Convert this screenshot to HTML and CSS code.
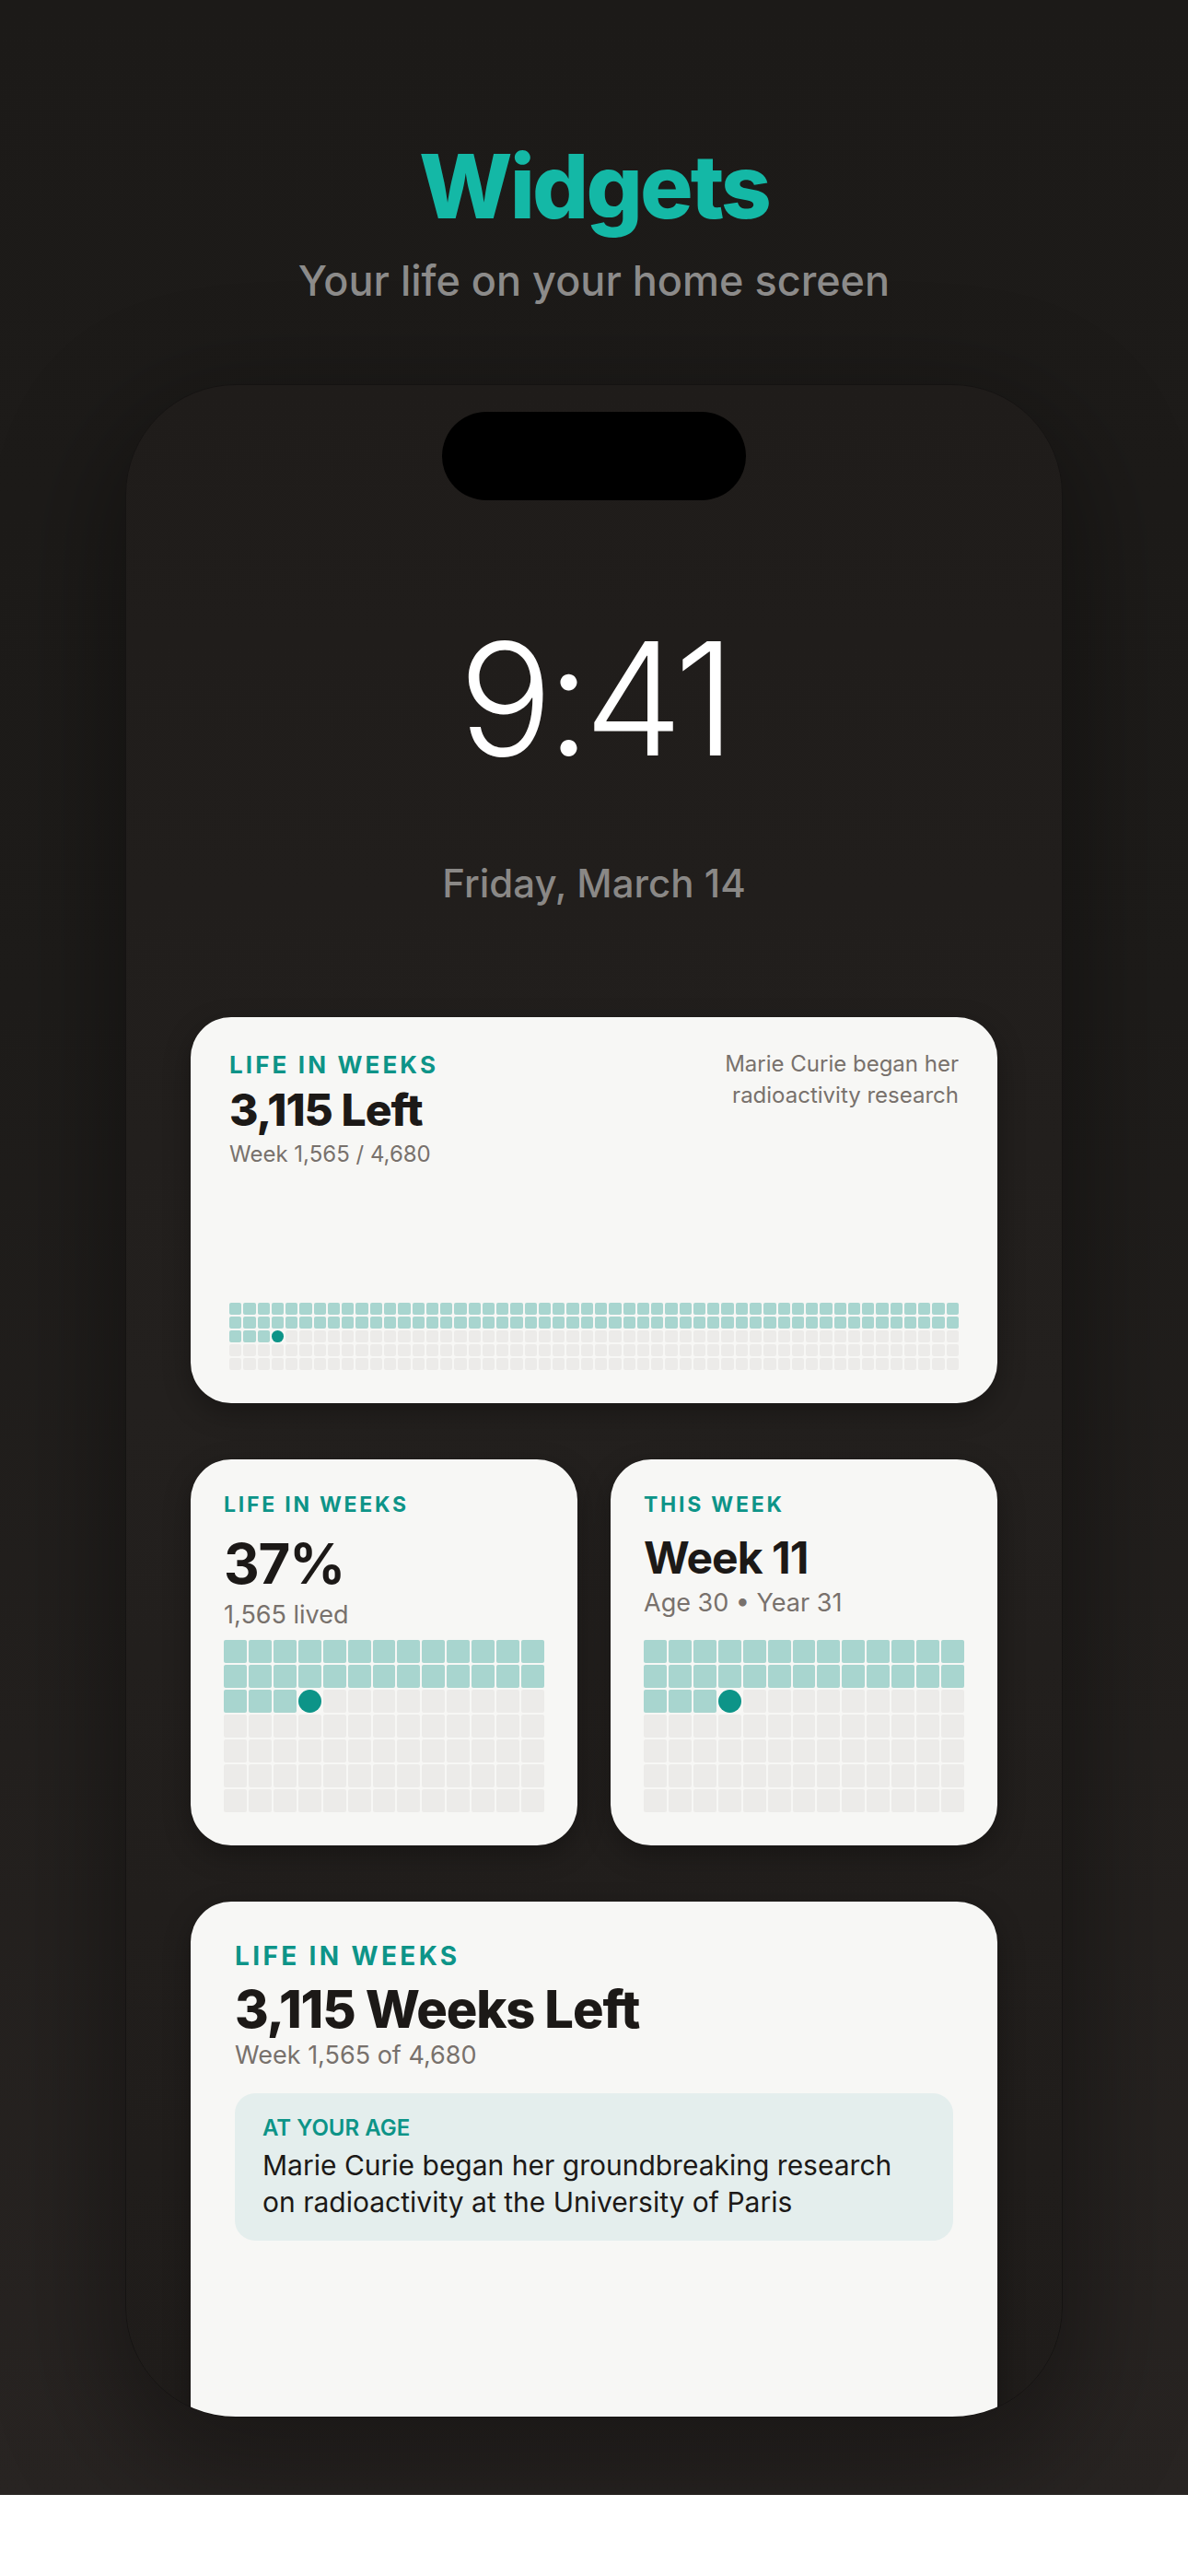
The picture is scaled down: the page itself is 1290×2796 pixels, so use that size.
FILE: index.html
```html
<!DOCTYPE html>
<html lang="en">
<head>
    <meta charset="UTF-8">
    <meta name="viewport" content="width=device-width, initial-scale=1.0">
    <title>Widgets</title>
    <link rel="stylesheet" href="styles.css">
</head>

<body>
    <div class="screen">
        <h1 class="title">Widgets</h1>
        <p class="subtitle">Your life on your home screen</p>

        <div class="phone">
            <div class="island"></div>
            <div class="clock">9:41</div>
            <div class="date">Friday, March 14</div>

            <div class="widgets">
                <!-- medium widget -->
                <div class="card card-wide">
                    <div class="head">
                        <div>
                            <div class="label">LIFE IN WEEKS</div>
                            <div class="big">3,115 Left</div>
                            <div class="sub">Week 1,565 / 4,680</div>
                        </div>
                        <div class="note">Marie Curie began her<br>radioactivity research</div>
                    </div>
                    <div class="weeks weeks-wide" data-cols="52" data-rows="5"></div>
                </div>

                <!-- two small widgets -->
                <div class="small-row">
                    <div class="card card-small">
                        <div class="label">LIFE IN WEEKS</div>
                        <div class="big big-pct">37%</div>
                        <div class="sub">1,565 lived</div>
                        <div class="weeks weeks-small" data-cols="13" data-rows="7"></div>
                    </div>
                    <div class="card card-small">
                        <div class="label">THIS WEEK</div>
                        <div class="big big-week">Week 11</div>
                        <div class="sub">Age 30 • Year 31</div>
                        <div class="weeks weeks-small" data-cols="13" data-rows="7"></div>
                    </div>
                </div>

                <!-- large widget -->
                <div class="card card-large">
                    <div class="label">LIFE IN WEEKS</div>
                    <div class="big">3,115 Weeks Left</div>
                    <div class="sub">Week 1,565 of 4,680</div>
                    <div class="fact">
                        <div class="fact-label">AT YOUR AGE</div>
                        <div class="fact-text">Marie Curie began her groundbreaking research<br>on radioactivity at the University of Paris</div>
                    </div>
                </div>
            </div>
        </div>
    </div>

    <script>
        // 画出每个小部件里的周格子：前两行已过，第三行三格，第四格是本周
        var grids = document.querySelectorAll(".weeks");
        for (var g = 0; g < grids.length; g++) {
            var cols = parseInt(grids[g].getAttribute("data-cols"));
            var rows = parseInt(grids[g].getAttribute("data-rows"));
            var lived = cols * 2 + 3;
            for (var i = 0; i < cols * rows; i++) {
                var cell = document.createElement("span");
                if (i < lived) {
                    cell.className = "cell lived";
                } else if (i == lived) {
                    cell.className = "cell now";
                } else {
                    cell.className = "cell";
                }
                grids[g].appendChild(cell);
            }
        }
    </script>
</body>

</html>
```

FILE: styles.css
```css
* {
    margin: 0;
    padding: 0;
    box-sizing: border-box;
}

html {
    background: #fff;
}

body {
    font-family: Inter, "Noto Sans", sans-serif;
}

.screen {
    background: linear-gradient(#1c1a18, #1e1c1a 40%, #282422);
    padding: 154px 0 84px;
}

.title {
    text-align: center;
    font-size: 96px;
    line-height: 96px;
    font-weight: 800;
    letter-spacing: -0.03em;
    color: #14b8a6;
}

.subtitle {
    margin-top: 28px;
    text-align: center;
    font-size: 45px;
    line-height: 53px;
    font-weight: 500;
    color: #8c8b8a;
}

/* 手机外壳 */
.phone {
    width: 1018px;
    height: 2207px;
    margin: 86px auto 0;
    padding: 0 70px;
    border: 1px solid #151312;
    border-radius: 120px;
    overflow: hidden;
    background: linear-gradient(#1f1c1a, #23201e 50%, #1f1c1a);
    box-shadow: 0 40px 120px 20px rgba(0, 0, 0, 0.35);
}

.island {
    width: 330px;
    height: 96px;
    margin: 29px auto 0;
    border-radius: 48px;
    background: #000;
}

.clock {
    margin-top: 130px;
    text-align: center;
    font-size: 170px;
    line-height: 170px;
    font-weight: 300;
    letter-spacing: -0.04em;
    color: #fff;
}

.date {
    margin-top: 90px;
    text-align: center;
    font-size: 42px;
    line-height: 52px;
    font-weight: 500;
    color: #8a8886;
}

.widgets {
    margin-top: 119px;
    display: flex;
    flex-direction: column;
    gap: 61px;
}

.card {
    background: #f7f7f5;
    border-radius: 44px;
    box-shadow: 0 10px 30px rgba(0, 0, 0, 0.3);
    display: flex;
    flex-direction: column;
}

.label {
    color: #0d9488;
    font-weight: 700;
    letter-spacing: 0.12em;
}

.big {
    color: #1c1917;
    font-weight: 700;
    letter-spacing: -0.02em;
}

.sub {
    color: #78716c;
}

/* 中号小部件 */
.card-wide {
    height: 419px;
    padding: 37px 42px 36px;
}

.card-wide .head {
    display: flex;
    justify-content: space-between;
    align-items: flex-start;
}

.card-wide .label {
    font-size: 26px;
    line-height: 30px;
}

.card-wide .big {
    margin-top: 8px;
    font-size: 48px;
    line-height: 51px;
    font-weight: 800;
}

.card-wide .sub {
    margin-top: 6px;
    font-size: 24px;
    line-height: 34px;
}

.card-wide .note {
    margin-top: -3px;
    text-align: right;
    font-size: 24px;
    line-height: 34px;
    color: #78716c;
}

/* 周格子 */
.weeks {
    margin-top: auto;
    display: grid;
    gap: 2px;
}

.weeks-wide {
    grid-template-columns: repeat(52, 1fr);
    grid-auto-rows: 13px;
}

.weeks-small {
    grid-template-columns: repeat(13, 1fr);
    grid-auto-rows: 25px;
}

.cell {
    background: #ecebe9;
    border-radius: 2px;
}

.cell.lived {
    background: #a8d5cf;
}

.cell.now {
    background: #0d9488;
    border-radius: 50%;
}

/* 两个小号小部件 */
.small-row {
    display: grid;
    grid-template-columns: 1fr 1fr;
    gap: 36px;
}

.card-small {
    height: 419px;
    padding: 36px;
}

.card-small .label {
    font-size: 23px;
    line-height: 26px;
}

.card-small .big {
    margin-top: 18px;
}

.big-pct {
    font-size: 60px;
    line-height: 66px;
}

.big-week {
    font-size: 48px;
    line-height: 53px;
}

.card-small .sub {
    margin-top: 5px;
    font-size: 27px;
    line-height: 35px;
}

/* 大号小部件 */
.card-large {
    height: 640px;
    padding: 43px 48px;
}

.card-large .label {
    font-size: 28px;
    line-height: 32px;
}

.card-large .big {
    margin-top: 12px;
    font-size: 56px;
    line-height: 60px;
    font-weight: 800;
}

.card-large .sub {
    margin-top: 2px;
    font-size: 27px;
    line-height: 36px;
}

.fact {
    margin-top: 23px;
    padding: 23px 30px 22px;
    border-radius: 22px;
    background: #e4eeed;
}

.fact-label {
    font-size: 24px;
    line-height: 30px;
    font-weight: 600;
    color: #0d9488;
}

.fact-text {
    margin-top: 5px;
    font-size: 30px;
    line-height: 40px;
    color: #1c1917;
}
```
